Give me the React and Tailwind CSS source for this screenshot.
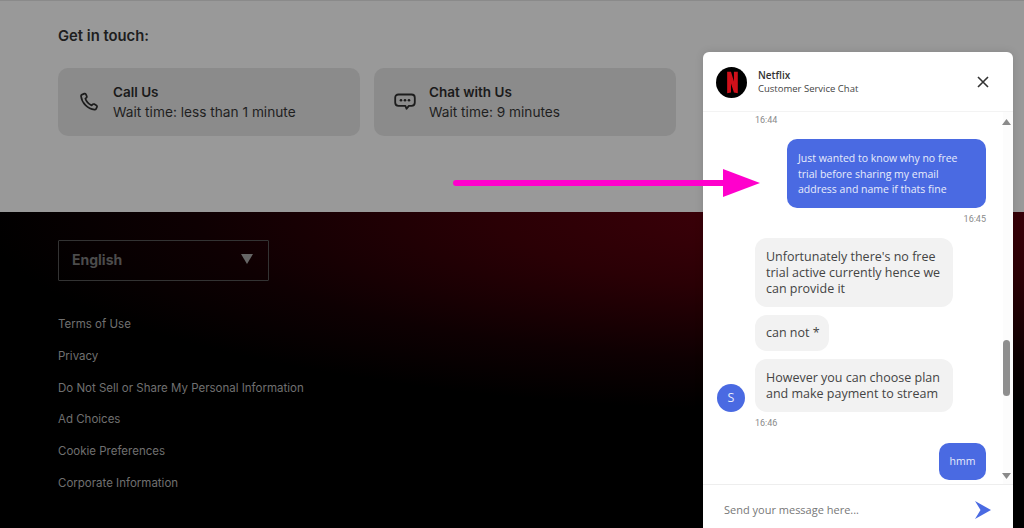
import React from "react";

const links = [
  "Terms of Use",
  "Privacy",
  "Do Not Sell or Share My Personal Information",
  "Ad Choices",
  "Cookie Preferences",
  "Corporate Information",
];

const PhoneIcon = () => (
  <svg width="24" height="24" viewBox="0 0 24 24" fill="none" stroke="#1c1c1c" strokeWidth="1.7" strokeLinejoin="round">
    <path d="M5 4.6 L7.4 3.6 C8 3.4 8.5 3.6 8.8 4.2 L9.8 6.3 C10 6.8 9.9 7.3 9.5 7.6 L8.3 8.6 C9.3 11.6 11.6 14.2 14.6 15.4 L15.8 14.3 C16.2 14 16.7 13.9 17.2 14.1 L19.5 15.4 C20.1 15.8 20.3 16.3 20 16.9 L19.1 18.8 C18.8 19.4 18.2 19.8 17.5 19.7 C10.6 19 4.8 13 4 6 C3.9 5.4 4.3 4.9 5 4.6 Z" />
  </svg>
);

const ChatIcon = () => (
  <svg width="24" height="24" viewBox="0 0 24 24" fill="none">
    <path d="M5.5 4.5 H18.5 C20.6 4.5 21.8 5.7 21.8 7.8 V12.6 C21.8 14.7 20.6 15.9 18.5 15.9 H15.8 L13.6 18.8 L12.4 15.9 H5.5 C3.4 15.9 2.2 14.7 2.2 12.6 V7.8 C2.2 5.7 3.4 4.5 5.5 4.5 Z" stroke="#1c1c1c" strokeWidth="1.8" strokeLinejoin="round" />
    <circle cx="8" cy="10.2" r="1.3" fill="#1c1c1c" />
    <circle cx="12" cy="10.2" r="1.3" fill="#1c1c1c" />
    <circle cx="16" cy="10.2" r="1.3" fill="#1c1c1c" />
  </svg>
);

const ContactCard = ({ icon, title, wait }) => (
  <div className="flex h-[68px] w-[302px] items-center gap-[12px] rounded-[10px] bg-[#8b8b8b] pl-[19px]">
    {icon}
    <div>
      <p className="text-[13.5px] leading-[20px] font-semibold text-[#1a1a1a]">{title}</p>
      <p className="text-[13.7px] leading-[20px] text-[#1f1f1f]">{wait}</p>
    </div>
  </div>
);

const NetflixLogo = () => (
  <svg className="mt-[1px]" width="31" height="31" viewBox="0 0 32 32">
    <circle cx="16" cy="16" r="16" fill="#000" />
    <path d="M11.5 5 H15.5 L18.5 15 V5 H22.5 V27 L18.5 26.2 L15.5 17 V26.2 L11.5 27 Z" fill="#d0101a" />
  </svg>
);

const Time = ({ children, right }) => (
  <p className={`font-['Roboto',sans-serif] text-[9px] leading-[14px] text-[#8a8a8a] ${right ? "text-right" : ""}`}>{children}</p>
);

const Bubble = ({ children, className }) => (
  <div className={`rounded-[12px] bg-[#f2f2f2] text-[12.5px] leading-[16px] text-[#444] ${className}`}>{children}</div>
);

const ScrollArrow = ({ d, className }) => (
  <svg className={`absolute left-[-1px] ${className}`} width="9" height="6" viewBox="0 0 9 6">
    <path d={d} fill="#8a8a8a" />
  </svg>
);

const ChatPanel = () => (
  <div className="absolute top-[52px] left-[703px] flex h-[476px] w-[310px] flex-col overflow-hidden rounded-t-[6px] bg-white font-['Open_Sans',sans-serif] shadow-[0_0_8px_rgba(0,0,0,0.12)]">
    <div className="flex h-[60px] shrink-0 items-center border-b border-[#f3f3f3] pr-[22px] pl-[13px]">
      <NetflixLogo />
      <div className="ml-[11px] flex-1">
        <p className="text-[10px] leading-[14px] font-semibold text-[#333]">Netflix</p>
        <p className="text-[9.5px] leading-[14px] text-[#444]">Customer Service Chat</p>
      </div>
      <svg width="16" height="16" viewBox="0 0 16 16" stroke="#333" strokeWidth="1.6" fill="none">
        <path d="M3 3 L13 13 M13 3 L3 13" />
      </svg>
    </div>
    <div className="flex min-h-0 flex-1">
      <div className="flex-1 overflow-hidden pt-[1px] pr-[17px] pl-[52px]">
        <Time>16:44</Time>
        <div className="mt-[12px] ml-[32px] h-[69px] w-[199px] rounded-[10px] bg-[#4a6ae2] px-[11px] pt-[12px] text-[10.5px] leading-[15.5px] text-[#e8ecfb]">
          Just wanted to know why no free trial before sharing my email address and name if thats fine
        </div>
        <div className="mt-[4px]">
          <Time right>16:45</Time>
        </div>
        <Bubble className="mt-[12px] w-[198px] px-[11px] pt-[11px] pb-[10px]">
          Unfortunately there's no free trial active currently hence we can provide it
        </Bubble>
        <Bubble className="mt-[8px] w-[74px] px-[11px] py-[10px] whitespace-nowrap">can not *</Bubble>
        <div className="relative mt-[8px]">
          <Bubble className="w-[198px] px-[11px] pt-[11px] pb-[10px]">
            However you can choose plan and make payment to stream
          </Bubble>
          <div className="absolute top-[25px] left-[-38px] flex h-[28px] w-[28px] items-center justify-center rounded-full bg-[#4a6ae2] text-[12.5px] text-[#e8ecfb]">
            S
          </div>
        </div>
        <div className="mt-[4px]">
          <Time>16:46</Time>
        </div>
        <div className="mt-[13px] ml-auto flex h-[37px] w-[47px] items-center justify-center rounded-[10px] bg-[#4a6ae2] text-[10.5px] text-[#e8ecfb]">
          hmm
        </div>
      </div>
      <div className="relative w-[10px] shrink-0 bg-[#fcfcfc]">
        <ScrollArrow className="top-[7px]" d="M4.5 0 L9 6 H0 Z" />
        <div className="absolute top-[228px] left-[0px] h-[56px] w-[7px] rounded-full bg-[#8f8f8f]" />
        <ScrollArrow className="top-[361px]" d="M0 0 H9 L4.5 6 Z" />
      </div>
    </div>
    <div className="flex h-[44px] shrink-0 items-center border-t border-[#eeeeee] pt-[8px] pr-[22px] pl-[21px]">
      <p className="flex-1 text-[11px] text-[#777]">Send your message here...</p>
      <svg className="mt-[-2px]" width="16" height="18" viewBox="0 0 16 18">
        <path d="M0 0 L16 9 L0 18 L5.5 9 Z" fill="#4a6ae2" />
      </svg>
    </div>
  </div>
);

export default function App() {
  return (
    <div className="relative h-[528px] w-[1024px] overflow-hidden font-['Inter',sans-serif]">
      <section className="h-[212px] border-t border-[#8a8a8a] bg-[#999999] pt-[25px] pl-[58px]">
        <h2 className="text-[14.8px] leading-[20px] font-semibold text-[#1e1e1e]">Get in touch:</h2>
        <div className="mt-[22px] flex gap-[14px]">
          <ContactCard icon={<PhoneIcon />} title="Call Us" wait="Wait time: less than 1 minute" />
          <ContactCard icon={<ChatIcon />} title="Chat with Us" wait="Wait time: 9 minutes" />
        </div>
      </section>
      <footer className="h-[316px] bg-[radial-gradient(ellipse_860px_200px_at_82%_0%,#42000a_0%,#2a0005_40%,#0e0002_75%,#000000_100%)] pt-[28px] pl-[58px]">
        <div className="flex h-[41px] w-[211px] items-center justify-between rounded-[1px] border border-[#333] pr-[15px] pl-[13px]">
          <span className="mt-[-3px] text-[14px] font-bold text-[#4c4c4c]">English</span>
          <svg className="mt-[-3px]" width="12" height="10" viewBox="0 0 12 10">
            <path d="M0 0 H12 L6 10 Z" fill="#666" />
          </svg>
        </div>
        <ul className="mt-[33px] flex flex-col gap-[11.8px]">
          {links.map((link) => (
            <li key={link} className="text-[11.5px] leading-[20px] text-[#707070]">
              {link}
            </li>
          ))}
        </ul>
      </footer>
      <ChatPanel />
      <svg className="absolute top-[168px] left-[453px]" width="310" height="30" viewBox="0 0 310 30">
        <path d="M3 15 H272" stroke="#ff00cc" strokeWidth="6" strokeLinecap="round" />
        <path d="M270 1 L307 15 L270 29 Z" fill="#ff00cc" />
      </svg>
    </div>
  );
}
